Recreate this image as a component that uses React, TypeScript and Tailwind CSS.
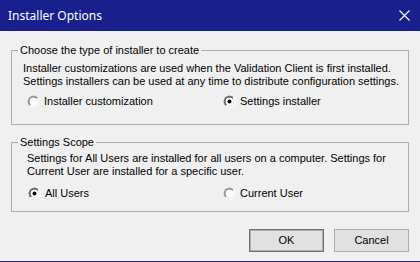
import React from "react";

function Radio({ checked }: { checked: boolean }) {
  return (
    <svg width="13" height="13" viewBox="0 0 13 13" className="shrink-0">
      <defs>
        <linearGradient id={checked ? "g1c" : "g1u"} x1="0" y1="0" x2="1" y2="1">
          <stop offset="0" stopColor={checked ? "#8a8a8a" : "#b0b0b0"} />
          <stop offset="0.5" stopColor={checked ? "#8a8a8a" : "#b0b0b0"} />
          <stop offset="0.5" stopColor="#ffffff" />
          <stop offset="1" stopColor="#ffffff" />
        </linearGradient>
        <linearGradient id={checked ? "g2c" : "g2u"} x1="0" y1="0" x2="1" y2="1">
          <stop offset="0" stopColor={checked ? "#404040" : "#7a7a7a"} />
          <stop offset="0.5" stopColor={checked ? "#404040" : "#7a7a7a"} />
          <stop offset="0.5" stopColor="#e3e3e3" />
          <stop offset="1" stopColor="#e3e3e3" />
        </linearGradient>
      </defs>
      <circle cx="6.5" cy="6.5" r="6" fill={`url(#${checked ? "g1c" : "g1u"})`} />
      <circle cx="6.5" cy="6.5" r="5" fill={`url(#${checked ? "g2c" : "g2u"})`} />
      <circle cx="6.5" cy="6.5" r="4" fill="#ffffff" />
      {checked && <circle cx="6.5" cy="6.5" r="2" fill="#000000" />}
    </svg>
  );
}

export default function App() {
  return (
    <div
      className="w-[420px] h-[262px] bg-[#f0f0f0] flex flex-col text-[11px] leading-[13px] text-black border-b border-[#1b2190]"
      style={{ fontFamily: '"Liberation Sans", Arial, sans-serif' }}
    >
      <div className="h-[31px] bg-[#19208d] flex items-center justify-between pl-[8px] pr-[10px] shrink-0">
        <span
          className="text-white text-[12px]"
          style={{ fontFamily: '"Noto Sans", "Open Sans", sans-serif' }}
        >
          Installer Options
        </span>
        <svg width="11" height="11" viewBox="0 0 11 11">
          <path d="M0.5 0.5 L10.5 10.5 M10.5 0.5 L0.5 10.5" stroke="#ffffff" strokeWidth="1.1" />
        </svg>
      </div>

      <fieldset className="mx-[11px] mt-[13px] border border-[#adadad]">
        <legend className="ml-[6px] px-[2px]">Choose the type of installer to create</legend>
        <div className="pl-[11px] pr-[8px] pb-[16px]">
          <div className="mt-[5px]">
            <div>Installer customizations are used when the Validation Client is first installed.</div>
            <div>Settings installers can be used at any time to distribute configuration settings.</div>
          </div>
          <div className="flex mt-[7px]">
            <label className="flex items-center gap-[4px] w-[200px] pl-[4px]">
              <Radio checked={false} />
              <span>Installer customization</span>
            </label>
            <label className="flex items-center gap-[4px]">
              <Radio checked={true} />
              <span>Settings installer</span>
            </label>
          </div>
        </div>
      </fieldset>

      <fieldset className="mx-[11px] mt-[11px] border border-[#adadad]">
        <legend className="ml-[6px] px-[2px]">Settings Scope</legend>
        <div className="pl-[15px] pr-[8px] pb-[11px]">
          <div className="mt-[3px]">
            <div>Settings for All Users are installed for all users on a computer. Settings for</div>
            <div>Current User are installed for a specific user.</div>
          </div>
          <div className="flex mt-[9px]">
            <label className="flex items-center gap-[4px] w-[196px] pl-[1px]">
              <Radio checked={true} />
              <span>All Users</span>
            </label>
            <label className="flex items-center gap-[4px]">
              <Radio checked={false} />
              <span>Current User</span>
            </label>
          </div>
        </div>
      </fieldset>

      <div className="flex justify-end gap-[10px] mt-[17px] mr-[11px]">
        <button className="w-[75px] h-[23px] bg-[#e1e1e1] border border-[#707070] outline outline-1 -outline-offset-2 outline-[#adadad]">
          OK
        </button>
        <button className="w-[75px] h-[23px] bg-[#e1e1e1] border border-[#adadad]">Cancel</button>
      </div>
    </div>
  );
}
